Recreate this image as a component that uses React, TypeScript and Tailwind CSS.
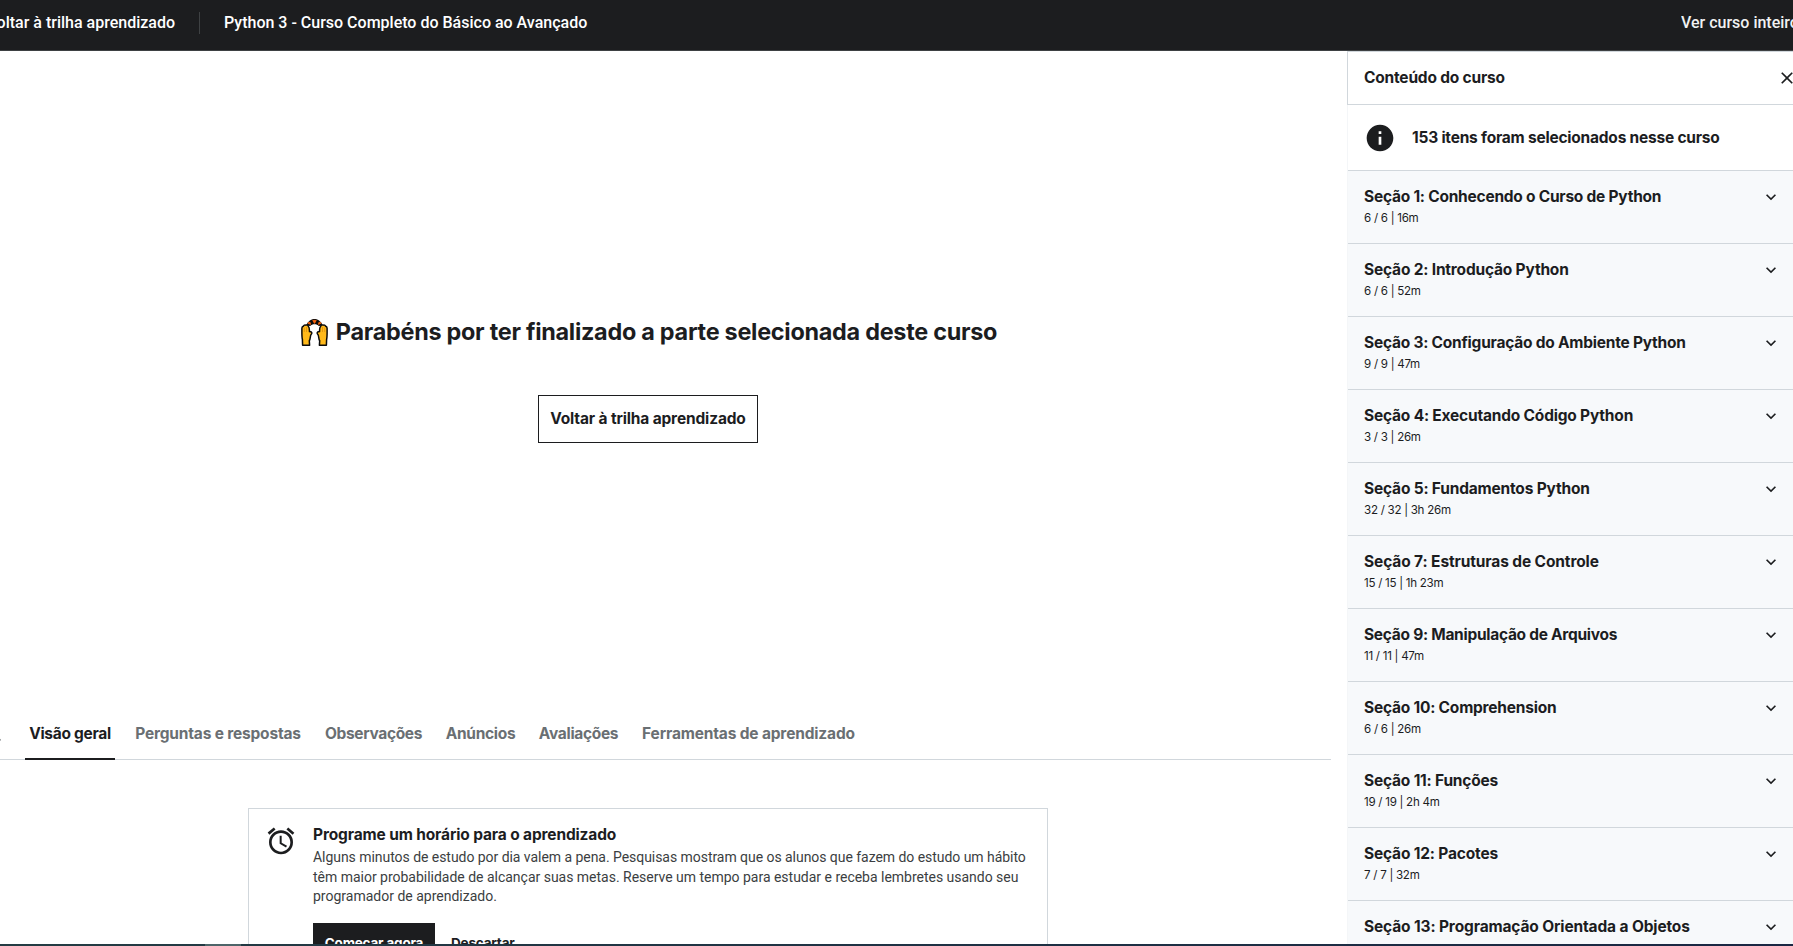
import { Search } from "lucide-react";
import { MdAlarm, MdClose, MdExpandMore, MdInfo } from "react-icons/md";

const sections = [
  { title: "Seção 1: Conhecendo o Curso de Python", meta: "6 / 6 | 16m", tracking: "tracking-[-0.24px]" },
  { title: "Seção 2: Introdução Python", meta: "6 / 6 | 52m", tracking: "tracking-[-0.19px]" },
  { title: "Seção 3: Configuração do Ambiente Python", meta: "9 / 9 | 47m", tracking: "tracking-[-0.23px]" },
  { title: "Seção 4: Executando Código Python", meta: "3 / 3 | 26m", tracking: "tracking-[-0.2px]" },
  { title: "Seção 5: Fundamentos Python", meta: "32 / 32 | 3h 26m", tracking: "tracking-[-0.19px]" },
  { title: "Seção 7: Estruturas de Controle", meta: "15 / 15 | 1h 23m", tracking: "tracking-[-0.12px]" },
  { title: "Seção 9: Manipulação de Arquivos", meta: "11 / 11 | 47m", tracking: "tracking-[-0.28px]" },
  { title: "Seção 10: Comprehension", meta: "6 / 6 | 26m", tracking: "tracking-[-0.22px]" },
  { title: "Seção 11: Funções", meta: "19 / 19 | 2h 4m", tracking: "tracking-[-0.2px]" },
  { title: "Seção 12: Pacotes", meta: "7 / 7 | 32m", tracking: "tracking-[-0.18px]" },
  { title: "Seção 13: Programação Orientada a Objetos", meta: "", tracking: "tracking-[-0.14px]" },
];

const tabs = [
  { label: "Visão geral", style: "w-[90px] tracking-[-0.3px]" },
  { label: "Perguntas e respostas", style: "w-[174px] tracking-[-0.18px]" },
  { label: "Observações", style: "w-[105px] tracking-[-0.33px]" },
  { label: "Anúncios", style: "w-[77px] tracking-[-0.3px]" },
  { label: "Avaliações", style: "w-[87px] tracking-[-0.32px]" },
  { label: "Ferramentas de aprendizado", style: "w-[221px] tracking-[-0.16px]" },
];

function RaisedHands() {
  const hand =
    "M.9 9.2C.9 7.6 1.9 7.4 2.4 7.2 2.9 6 4 5.8 4.8 6.2 6 5.6 7.2 6.4 7.4 7.6 8.5 8.2 8.3 10 8.5 12.6L10.4 13.1C11.3 13.8 10.7 14.9 10 15.6 9 17 9.6 20 8.3 21.8L8.6 26.2H1.6L1.4 20.5C.7 18 .9 13 .9 9.2Z";
  return (
    <svg width="27" height="27" viewBox="0 0 27 27" className="shrink-0">
      <path d="M5.2 6.4C6.8 2.6 9.8.1 13.5.1s6.7 2.5 8.3 6.3l-4 .6c-1-1.2-2.4-1.8-4.3-1.8s-3.3.6-4.3 1.8Z" fill="#0b0b0b" />
      <path d="M6.8 4 9 3.2 9.5 5.4ZM11.8 1.4h3.4L13.5 4.4ZM18 3.2l2.2.8-2.7 1.4Z" fill="#f7630c" stroke="#f7630c" strokeWidth=".9" />
      <g fill="#ffb91a" stroke="#0b0b0b" strokeWidth="1.5" strokeLinejoin="round">
        <path d={hand} />
        <path d={hand} transform="matrix(-1 0 0 1 27 0)" />
      </g>
      <path d="M3.3 8.6V13M5.5 8V13M21.5 8v5M23.7 8.6V13" stroke="#d98a10" strokeWidth=".7" />
    </svg>
  );
}

function TopBar() {
  return (
    <header className="flex h-[51px] shrink-0 items-center border-b border-[#3e4143] bg-[#1c1d1f] pb-1 font-[Roboto,sans-serif] text-base font-medium text-white">
      <div className="flex w-[175px] shrink-0 justify-end whitespace-nowrap">Voltar à trilha aprendizado</div>
      <div className="ml-6 h-[22px] w-px bg-[#3e4143]" />
      <div className="ml-6 whitespace-nowrap">Python 3 - Curso Completo do Básico ao Avançado</div>
      <div className="ml-auto w-[112px] overflow-hidden whitespace-nowrap text-[#f0f1f2]">Ver curso inteiro</div>
    </header>
  );
}

function Completion() {
  return (
    <section className="flex h-[659px] w-[1296px] shrink-0 flex-col items-center pt-[265px]">
      <div className="flex items-center gap-2 pl-0.5">
        <RaisedHands />
        <h1 className="text-[23.4px] leading-8 font-bold tracking-[-0.265px] whitespace-nowrap">
          Parabéns por ter finalizado a parte selecionada deste curso
        </h1>
      </div>
      <button className="mt-[47px] h-12 w-[220px] border border-[#1c1d1f] text-[15.5px] font-bold tracking-[-0.15px] whitespace-nowrap">
        Voltar à trilha aprendizado
      </button>
    </section>
  );
}

function TabBar() {
  return (
    <nav className="flex h-[50px] w-[1331px] shrink-0 border-b border-[#d1d7dc]">
      <div className="flex w-[25px] shrink-0 overflow-hidden pt-[15px]">
        <Search size={17} strokeWidth={2.4} className="-ml-[15px] shrink-0 text-[#6a6f73]" />
      </div>
      <div className="flex gap-4">
        {tabs.map((tab, i) => (
          <div
            key={tab.label}
            className={`${tab.style} ${i === 0 ? "border-b-2 border-[#1c1d1f]" : "text-[#6a6f73]"} -mb-px pt-3 text-center text-[15.5px] leading-6 font-bold whitespace-nowrap`}
          >
            {tab.label}
          </div>
        ))}
      </div>
    </nav>
  );
}

function ReminderCard() {
  return (
    <section className="mt-12 ml-[248px] flex h-[220px] w-[800px] shrink-0 border border-[#d1d7dc] pt-4 pl-4">
      <MdAlarm size={32} className="shrink-0" />
      <div className="ml-4 flex flex-col">
        <h2 className="text-[15.5px] leading-5 font-bold tracking-[-0.14px]">Programe um horário para o aprendizado</h2>
        <div className="mt-[3px] font-[Roboto,sans-serif] text-sm leading-[19.6px] whitespace-nowrap text-[#3b3e41]">
          <p className="tracking-[-0.045px]">
            Alguns minutos de estudo por dia valem a pena. Pesquisas mostram que os alunos que fazem do estudo um hábito
          </p>
          <p className="tracking-[-0.015px]">
            têm maior probabilidade de alcançar suas metas. Reserve um tempo para estudar e receba lembretes usando seu
          </p>
          <p>programador de aprendizado.</p>
        </div>
        <div className="mt-4 flex text-[13.5px] font-bold tracking-[-0.2px]">
          <button className="h-10 w-[122px] bg-[#1c1d1f] whitespace-nowrap text-white">Começar agora</button>
          <button className="ml-4 h-10">Descartar</button>
        </div>
      </div>
    </section>
  );
}

function Sidebar() {
  return (
    <aside className="flex w-[446px] shrink-0 flex-col overflow-hidden">
      <div className="flex h-[54px] shrink-0 items-center justify-between border border-r-0 border-[#d1d7dc] pl-4">
        <h2 className="text-[15.5px] font-bold tracking-[-0.2px]">Conteúdo do curso</h2>
        <MdClose size={20} className="-mr-1 shrink-0" />
      </div>
      <div className="flex flex-col border-l border-[#f4f6f8]">
        <div className="flex h-[66px] shrink-0 items-center border-b border-[#d1d7dc] pl-4">
          <MdInfo size={32} />
          <span className="ml-4 text-[15.5px] font-bold tracking-[-0.22px]">153 itens foram selecionados nesse curso</span>
        </div>
        {sections.map((section) => (
          <div
            key={section.title}
            className="flex h-[73px] shrink-0 justify-between border-b border-[#d1d7dc] bg-[#f7f9fb] pt-[15px] pr-3 pl-4"
          >
            <div>
              <div className={`${section.tracking} text-[15.5px] leading-[22px] font-bold`}>{section.title}</div>
              <div className="text-[11.6px] leading-5 tracking-[-0.28px] text-[#1c1d1f]">{section.meta}</div>
            </div>
            <MdExpandMore size={20} className="mt-px shrink-0" />
          </div>
        ))}
      </div>
    </aside>
  );
}

export default function App() {
  return (
    <div className="flex h-[946px] w-[1793px] flex-col overflow-hidden bg-white font-[Inter,sans-serif] text-[#1c1d1f]">
      <TopBar />
      <div className="flex h-[893px] shrink-0 overflow-hidden">
        <main className="flex w-[1347px] shrink-0 flex-col overflow-hidden">
          <Completion />
          <TabBar />
          <ReminderCard />
        </main>
        <Sidebar />
      </div>
      <div className="flex h-0.5 shrink-0 bg-linear-to-r from-[#243c43] to-[#1a2743]">
        <div className="ml-[205px] w-9 bg-[#4d6569]" />
      </div>
    </div>
  );
}
